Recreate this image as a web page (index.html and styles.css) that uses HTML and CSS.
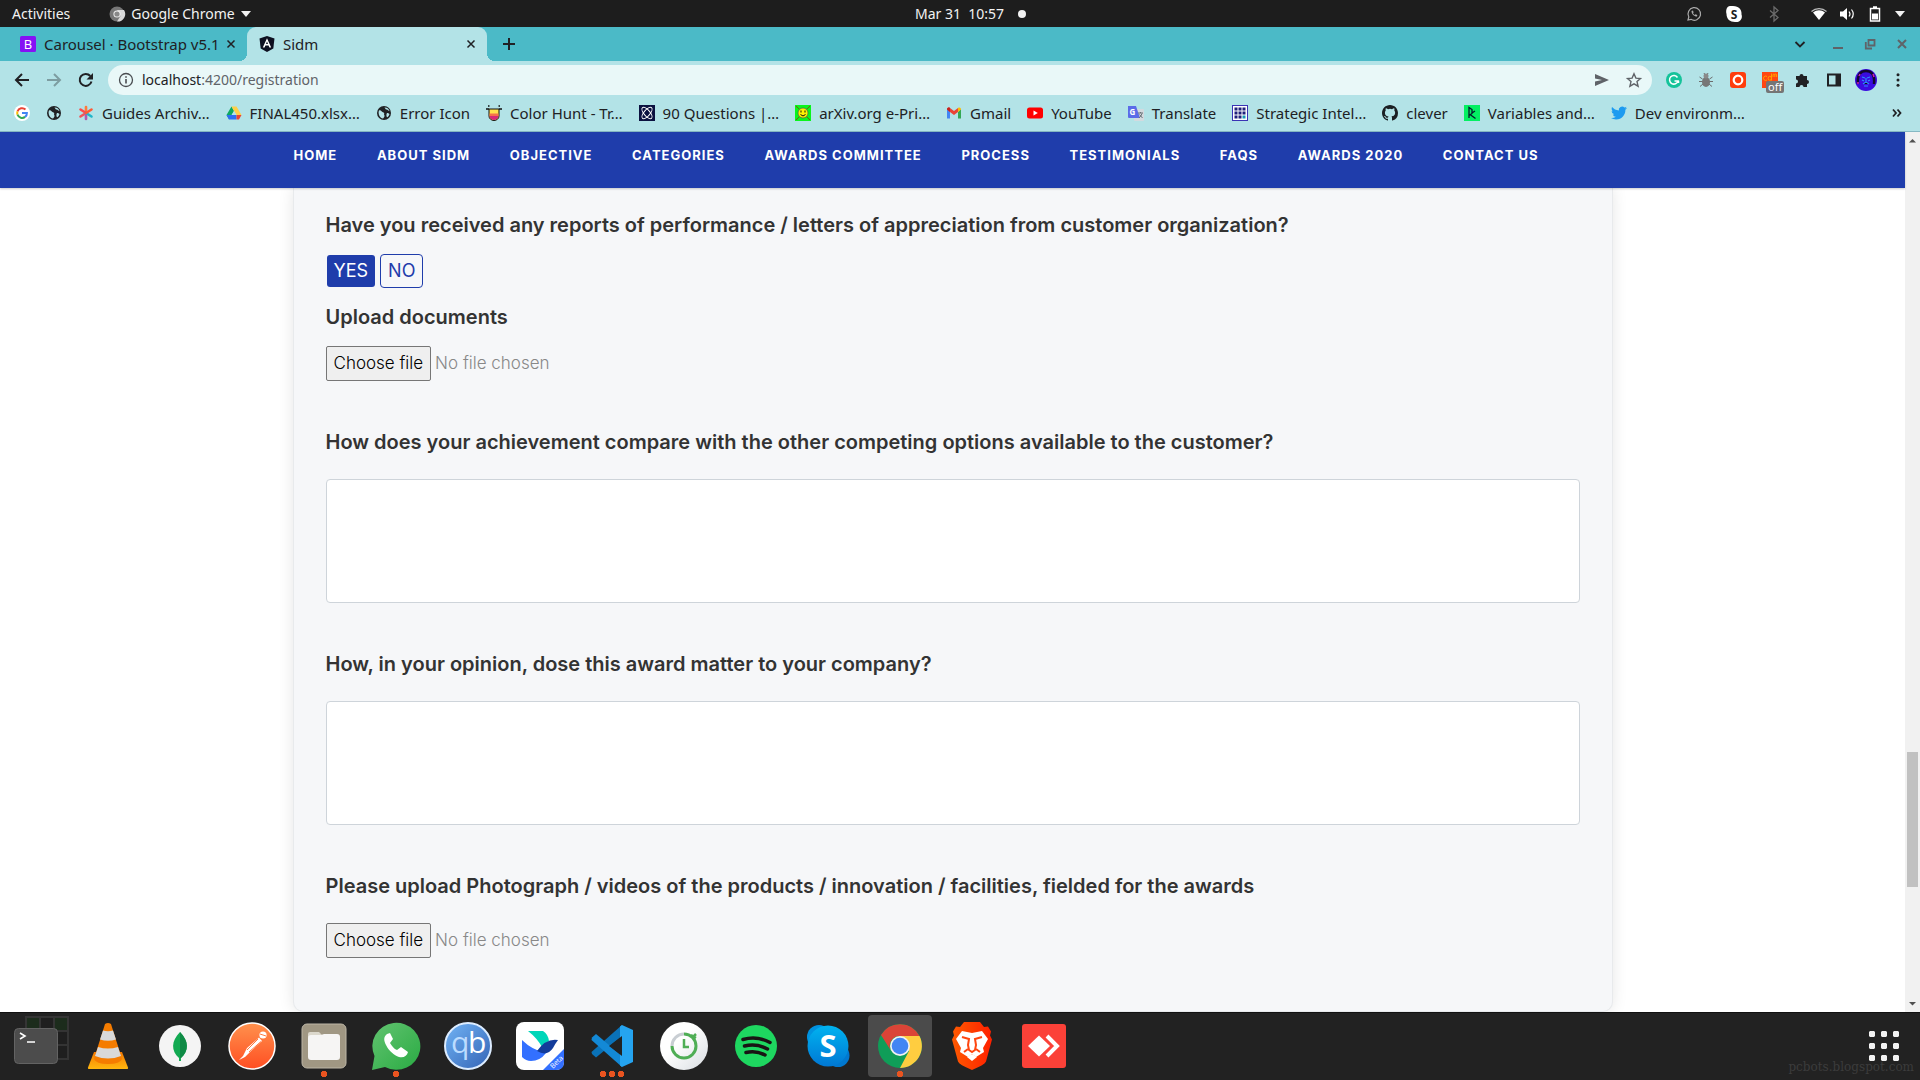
FILE: index.html
```html
<!DOCTYPE html>
<html lang="en">
<head>
<meta charset="utf-8">
<title>Sidm</title>
<link rel="stylesheet" href="styles.css">
</head>
<body>
<svg class="defs" aria-hidden="true">
  <defs>
    <linearGradient id="gVlc" x1="0" y1="0" x2="0" y2="1"><stop offset="0" stop-color="#f57900"/><stop offset="1" stop-color="#ffb70f"/></linearGradient>
    <linearGradient id="gPost" x1="0" y1="0" x2="0" y2="1"><stop offset="0" stop-color="#ff914d"/><stop offset="1" stop-color="#ff4e22"/></linearGradient>
    <linearGradient id="gQb" x1="0" y1="0" x2="1" y2="1"><stop offset="0" stop-color="#72b4f5"/><stop offset="1" stop-color="#3363b5"/></linearGradient>
    <linearGradient id="gWa" x1="0" y1="0" x2="1" y2="1"><stop offset="0" stop-color="#62c370"/><stop offset="1" stop-color="#2aab43"/></linearGradient>
    <linearGradient id="gSk" x1="0" y1="0" x2="0" y2="1"><stop offset="0" stop-color="#00b3f0"/><stop offset="1" stop-color="#0078d4"/></linearGradient>
    <linearGradient id="gBr" x1="0" y1="0" x2="1" y2="0"><stop offset="0" stop-color="#ff5a00"/><stop offset="1" stop-color="#ff2000"/></linearGradient>
    <linearGradient id="gTime" x1="0" y1="0" x2="1" y2="1"><stop offset="0.4" stop-color="#ffffff"/><stop offset="1" stop-color="#d9dde2"/></linearGradient>
  </defs>
  <symbol id="globe" viewBox="0 0 16 16"><circle cx="8" cy="8" r="7" fill="#202124"/><path d="M3 5.500c2-1 2.500 1.500 4.500 2 1.500.500 0 2 1 3 .5.700-1 2.500-1.500 3C4 13 2.500 10 2.600 7zM8 2.500c1.500 0 1 2 2.500 2s1.500 1.500 3 1.500c-.5-2-2.500-4-5.500-3.500zM11 8c1 0 2 .5 2.500 1-.5 2-1.500 3-2.500 3.300-.8-1-.8-3.300 0-4.300z" fill="#b3e3e7"/></symbol>
  <symbol id="close" viewBox="0 0 10 10"><path d="M1.500 1.500l7 7M8.500 1.500l-7 7" stroke="currentColor" stroke-width="1.500"/></symbol>
</svg>

<header class="topbar">
  <div class="topbar-side">
    <span>Activities</span>
    <span class="app-menu">
      <svg width="16" height="16" viewBox="0 0 16 16"><circle cx="8" cy="8" r="7.500" fill="#777"/><path d="M8 4h7a7.500 7.500 0 0 1-7 11.500L11.500 10z" fill="#d8d8d8"/><circle cx="8" cy="8" r="3.600" fill="#eee"/><circle cx="8" cy="8" r="2.600" fill="#888"/></svg>
      Google Chrome
      <svg width="10" height="6" viewBox="0 0 10 6"><path d="M0 0h10L5 6z" fill="#f2f2f2"/></svg>
    </span>
  </div>
  <div class="clock"><span>Mar 31&nbsp; 10:57</span><i></i></div>
  <div class="topbar-side tray">
    <svg class="tray-wide" width="16" height="16" viewBox="0 0 16 16" fill="none" stroke="#aaa" stroke-width="1.200"><path d="M2 14l.8-3A6.300 6.300 0 1 1 5 13.300z"/><path d="M5.500 5c0 3 2.500 5.500 5.500 5.500l.3-1.500-1.800-.7-.8.700C7.900 8.600 7.300 7.900 7 7.200l.6-.8L7 4.600z" fill="#aaa" stroke="none"/></svg>
    <svg class="tray-wide" width="16" height="16" viewBox="0 0 16 16"><path d="M4 0h3c6 0 9 4 8.500 8.500C17 12 14 16 11.500 16H9C4 16 .5 13 .5 8-.5 4 1 0 4 0z" fill="#fff"/><text x="8" y="12.500" text-anchor="middle" class="glyph-bold" font-size="12" fill="#1d1d1d">S</text></svg>
    <svg class="tray-bt" width="16" height="16" viewBox="0 0 16 16"><path d="M4 4.500l8 7L8 15V1l4 3.500-8 7" fill="none" stroke="#6b6b6b" stroke-width="1.300"/></svg>
    <svg width="16" height="16" viewBox="0 0 16 16"><path d="M.5 5.500a11 11 0 0 1 15 0" stroke="#bbb" stroke-width="1.200" fill="none"/><path d="M2 6.500a9 9 0 0 1 12 0L8 14z" fill="#fff"/></svg>
    <svg width="16" height="16" viewBox="0 0 16 16"><path d="M1 5.500h3L8 2v12l-4-3.500H1z" fill="#fff"/><path d="M10 5.500q2 2.500 0 5M12.500 3.500q3.500 4.500 0 9" stroke="#fff" fill="none" stroke-width="1.200"/></svg>
    <svg width="16" height="16" viewBox="0 0 16 16"><path d="M3.500 2.500h9v12.500h-9zM6 1h4" fill="none" stroke="#fff" stroke-width="1.500"/><path d="M5 7.500h6v6H5z" fill="#fff"/></svg>
    <svg width="10" height="6" viewBox="0 0 10 6"><path d="M0 0h10L5 6z" fill="#f2f2f2"/></svg>
  </div>
</header>

<section class="tabs">
  <div class="tab">
    <svg width="16" height="16" viewBox="0 0 16 16"><rect width="16" height="16" rx="1.500" fill="#8512f5"/><text x="8" y="13" text-anchor="middle" class="glyph" font-size="13" fill="#fff">B</text></svg>
    <span class="tab-title">Carousel · Bootstrap v5.1</span>
    <button class="icon-btn" aria-label="Close tab"><svg width="10" height="10"><use href="#close"/></svg></button>
  </div>
  <div class="tab active">
    <svg width="16" height="16" viewBox="0 0 16 16"><path d="M8 0l7.500 2.500-1.200 10L8 16l-6.300-3.500L.5 2.500z" fill="#0d1020"/><path d="M8 2.300l4.200 9.200h-1.800l-.8-2H6.400l-.8 2H3.800zM8 5.500L7 8h2z" fill="#fff"/></svg>
    <span class="tab-title">Sidm</span>
    <button class="icon-btn" aria-label="Close tab"><svg width="10" height="10"><use href="#close"/></svg></button>
  </div>
  <button class="icon-btn new-tab" aria-label="New tab"><svg width="12" height="12" viewBox="0 0 12 12"><path d="M6 0v12M0 6h12" stroke="#202124" stroke-width="2"/></svg></button>
  <div class="window-controls">
    <button class="icon-btn search-tabs" aria-label="Search tabs"><svg width="12" height="12" viewBox="0 0 12 12"><path d="M1.500 4L6 8.500 10.500 4" fill="none" stroke="#202124" stroke-width="1.800"/></svg></button>
    <button class="icon-btn" aria-label="Minimize"><svg width="12" height="12" viewBox="0 0 12 12"><path d="M1 10h10" stroke="#5f6368" stroke-width="2"/></svg></button>
    <button class="icon-btn" aria-label="Restore"><svg width="12" height="12" viewBox="0 0 12 12"><path d="M4.500 2h6v5.500h-6zM1.800 4v6.500H8" fill="none" stroke="#5f6368" stroke-width="1.800"/></svg></button>
    <button class="icon-btn" aria-label="Close"><svg width="12" height="12" viewBox="0 0 12 12"><path d="M2 2l8 8M10 2l-8 8" stroke="#5f6368" stroke-width="2"/></svg></button>
  </div>
</section>

<section class="toolbar">
  <button class="icon-btn" aria-label="Back"><svg width="16" height="16" viewBox="0 0 16 16"><path d="M15 8H2M8 2L2 8l6 6" fill="none" stroke="#202124" stroke-width="2"/></svg></button>
  <button class="icon-btn" aria-label="Forward"><svg width="16" height="16" viewBox="0 0 16 16"><path d="M1 8h13M8 2l6 6-6 6" fill="none" stroke="#7d9da1" stroke-width="2"/></svg></button>
  <button class="icon-btn" aria-label="Reload"><svg width="16" height="16" viewBox="0 0 16 16"><path d="M13.500 9.500A6 6 0 1 1 12.300 4" fill="none" stroke="#202124" stroke-width="2"/><path d="M15 1v6.500H8.500z" fill="#202124"/></svg></button>
  <div class="omnibox">
    <svg width="16" height="16" viewBox="0 0 16 16"><circle cx="8" cy="8" r="6.500" fill="none" stroke="#4a4d51" stroke-width="1.300"/><path d="M8 7v4.500M8 4.300v1.500" stroke="#4a4d51" stroke-width="1.600"/></svg>
    <span class="url"><b>localhost</b>:4200/registration</span>
    <svg width="16" height="16" viewBox="0 0 16 16"><path d="M1 2l14 6-14 6V9.500L8 8 1 6.500z" fill="#5f6368"/></svg>
    <svg width="16" height="16" viewBox="0 0 16 16"><path d="M8 1.800l1.900 4.300 4.600.4-3.500 3.100 1.100 4.600L8 11.800l-4.100 2.400L5 9.600 1.500 6.500l4.600-.4z" fill="none" stroke="#5f6368" stroke-width="1.400"/></svg>
  </div>
  <svg width="16" height="16" viewBox="0 0 16 16"><circle cx="8" cy="8" r="8" fill="#15c39a"/><path d="M11.500 5.500A4.300 4.300 0 1 0 12 9H8.500M12.500 11V8.800" fill="none" stroke="#fff" stroke-width="1.500"/></svg>
  <svg width="16" height="16" viewBox="0 0 16 16"><path d="M1.500 5l3 2M14.500 5l-3 2M1 9.500h14M2 14.500l3-2.500M14 14.500L11 12M6 1l1 2M10 1L9 3" stroke="#6d6d6d"/><ellipse cx="8" cy="10" rx="4" ry="5" fill="#777"/><circle cx="8" cy="4" r="2.500" fill="#8a8a8a"/></svg>
  <svg width="16" height="16" viewBox="0 0 16 16"><rect width="16" height="16" rx="3" fill="#ff3d0d"/><circle cx="8" cy="8" r="4.300" fill="none" stroke="#fff" stroke-width="2.200"/></svg>
  <span class="ext"><svg width="16" height="16" viewBox="0 0 16 16"><rect width="16" height="16" fill="#ff4713"/><path d="M5 4.500a2.200 2.200 0 1 0 0 3.500M9.500 1.500v7M9.500 6.300a1.700 2 0 1 1-3.400 0 1.700 2 0 1 1 3.400 0M11 5V2.500q1-1 1.800 0V5M12.800 2.500q1-1 1.800 0V5" fill="none" stroke="#ffa000"/></svg><span class="badge">off</span></span>
  <svg width="16" height="16" viewBox="0 0 16 16"><path d="M2 4h3.500a2 2 0 1 1 4 0H13v4a2 2 0 1 1 0 4v3H9.500a2 2 0 0 0-4 0H2v-3.500a2 2 0 0 0 0-4z" fill="#202124"/></svg>
  <svg width="16" height="16" viewBox="0 0 16 16"><path d="M2 2.500h12v11H2z" fill="none" stroke="#202124" stroke-width="2"/><path d="M9.500 2H14v12H9.500z" fill="#202124"/></svg>
  <svg class="avatar" width="22" height="22" viewBox="0 0 22 22"><circle cx="11" cy="11" r="11" fill="#3a0be0"/><path d="M3 15C2 5 6 2 11 2s9 3 8 13" fill="none" stroke="#12062f" stroke-width="2.500"/><path d="M7 8l3 1M15 8l-3 1M11 9v4M8 15l3-2 3 2M9 17h4M7 11l2 1M15 11l-2 1" stroke="#2d8cff" stroke-width="1.200"/><path d="M4 7l1-2M18 5l1 3M3 13v2" stroke="#d01bb8" stroke-width="1.500"/></svg>
  <button class="icon-btn" aria-label="Menu"><svg width="16" height="16" viewBox="0 0 16 16" fill="#202124"><circle cx="8" cy="2.800" r="1.500"/><circle cx="8" cy="8" r="1.500"/><circle cx="8" cy="13.200" r="1.500"/></svg></button>
</section>

<nav class="bookmarks" aria-label="Bookmarks">
  <a href="#"><svg width="16" height="16" viewBox="0 0 16 16"><circle cx="8" cy="8" r="8" fill="#fff"/><path d="M3.500 6.300A5 5 0 0 1 11.500 4.500" stroke="#ea4335" stroke-width="2" fill="none"/><path d="M3.500 6.300a5 5 0 0 0 0 3.400" stroke="#fbbc05" stroke-width="2" fill="none"/><path d="M3.500 9.700a5 5 0 0 0 7.600 2.200" stroke="#34a853" stroke-width="2" fill="none"/><path d="M11.100 11.900A4.800 4.800 0 0 0 12.900 8H8" stroke="#4285f4" stroke-width="2" fill="none"/></svg></a>
  <a href="#"><svg width="16" height="16"><use href="#globe"/></svg></a>
  <a href="#"><svg width="16" height="16" viewBox="0 0 16 16" stroke-width="2.600" stroke-linecap="round"><path d="M8 8V2" stroke="#ff7a3d"/><path d="M8 8L2.500 4.500" stroke="#ff4a4a"/><path d="M8 8l-5.500 3.500" stroke="#f2545b"/><path d="M8 8v6" stroke="#b05bb0"/><path d="M8 8l5.500 3.500" stroke="#20b6c9"/><path d="M8 8l5.500-3.500" stroke="#ff5a36"/></svg>Guides Archiv…</a>
  <a href="#"><svg width="16" height="16" viewBox="0 0 16 16"><path d="M5.500 1.500L8 6 3 14.500.5 10z" fill="#0da960"/><path d="M5.500 1.500h5L15.500 10h-5z" fill="#ffcf48"/><path d="M3 10h7.500v4.500H3L.5 10z" fill="#2d6ff2"/><path d="M10.500 10h5L13 14.500h-2.500z" fill="#ea4335"/><path d="M5.600 10h4.800L8 5.900z" fill="#b3e3e7"/></svg>FINAL450.xlsx…</a>
  <a href="#"><svg width="16" height="16"><use href="#globe"/></svg>Error Icon</a>
  <a href="#"><svg width="16" height="16" viewBox="0 0 16 16"><path d="M3 4h10v7a5 4.500 0 0 1-10 0z" fill="#ffe14d" stroke="#111"/><path d="M3.500 8.500h9v2.500h-9z" fill="#f4724a"/><path d="M3.500 11h9a4.500 4 0 0 1-9 0z" fill="#d62976"/><path d="M0 4h3M13 4h3M2 1h1.500M12.500 1H14" stroke="#111" stroke-width="1.500"/></svg>Color Hunt - Tr…</a>
  <a href="#"><svg width="16" height="16" viewBox="0 0 16 16"><rect width="16" height="16" fill="#0b1240"/><g fill="none" stroke="#fff"><ellipse cx="8" cy="8" rx="7" ry="3" transform="rotate(50 8 8)"/><ellipse cx="8" cy="8" rx="7" ry="3" transform="rotate(-50 8 8)"/></g></svg>90 Questions |…</a>
  <a href="#"><svg width="16" height="16" viewBox="0 0 16 16"><rect width="16" height="16" fill="#0af41c"/><path d="M1 1l14 14M15 1L1 15" stroke="#7b5410"/><circle cx="8" cy="8" r="5" fill="#fff200" stroke="#555" stroke-width=".7"/><path d="M6 5.500v2M10 5.500v2M5.500 9.500q2.500 3 5 0" stroke="#111" fill="none"/></svg>arXiv.org e-Pri…</a>
  <a href="#"><svg width="16" height="16" viewBox="0 0 16 16"><path d="M1 4v9.500h3V7z" fill="#4285f4"/><path d="M15 4v9.500h-3V7z" fill="#34a853"/><path d="M1 4.500C1 2.500 3 2 4 3l4 3 4-3v4l-4 3-4-3z" fill="#ea4335"/><path d="M12 3c1.500-1 3-.3 3 1.500L12 7z" fill="#fbbc04"/><path d="M1 4.500C1 2.500 3 2 4 3v4z" fill="#c5221f"/></svg>Gmail</a>
  <a href="#"><svg width="16" height="16" viewBox="0 0 16 16"><rect y="2.500" width="16" height="11" rx="2.500" fill="#f00"/><path d="M6.500 5.500v5L10.800 8z" fill="#fff"/></svg>YouTube</a>
  <a href="#"><svg width="16" height="16" viewBox="0 0 16 16"><rect x="6" y="4" width="10" height="12" rx="1" fill="#d3dadf"/><path d="M0 1h8l4 12H1q-1 0-1-1z" fill="#5b6be8"/><text x="1.500" y="9.500" class="glyph-bold" font-size="8" fill="#fff">G</text><path d="M10 8h5M12.500 7v1M14 8.500q-1 3-3 4.500M11.500 9.500l3 3.500" stroke="#6a7378" fill="none"/></svg>Translate</a>
  <a href="#"><svg width="16" height="16" viewBox="0 0 16 16"><rect x=".5" y=".5" width="15" height="15" fill="#fff" stroke="#3b34b5"/><path d="M2.500 2.500h3v3h-3zm4 0h3v3h-3zm4 0h3v3h-3zm-8 4h3v3h-3zm4 0h3v3h-3zm4 0h3v3h-3zm-8 4h3v3h-3zm4 0h3v3h-3z" fill="#20207a"/><path d="M10.500 10.500h3v3h-3z" fill="#1899b5"/></svg>Strategic Intel…</a>
  <a href="#"><svg width="16" height="16" viewBox="0 0 16 16"><path d="M8 0C3.580 0 0 3.580 0 8c0 3.540 2.290 6.530 5.470 7.590.4.070.55-.17.55-.38 0-.19-.01-.82-.01-1.490-2.010.37-2.530-.49-2.690-.94-.09-.23-.48-.94-.82-1.130-.28-.15-.68-.52-.01-.53.630-.01 1.080.58 1.230.82.72 1.210 1.870.87 2.330.66.070-.52.280-.87.510-1.070-1.780-.2-3.640-.89-3.640-3.950 0-.87.310-1.590.82-2.150-.08-.2-.36-1.020.08-2.120 0 0 .67-.21 2.200.82a7.500 7.500 0 0 1 4 0c1.530-1.040 2.200-.82 2.200-.82.440 1.100.16 1.920.08 2.120.510.56.82 1.270.82 2.150 0 3.070-1.870 3.750-3.650 3.950.290.25.540.73.540 1.480 0 1.070-.01 1.930-.01 2.200 0 .210.150.46.550.38A8 8 0 0 0 16 8c0-4.420-3.580-8-8-8z" fill="#1b1f23"/></svg>clever</a>
  <a href="#"><svg width="16" height="16" viewBox="0 0 16 16"><rect width="16" height="16" fill="#03ef62"/><path d="M5 13V2.500L8 4.500v4L5 10.500M8 8l3-2M6 9.500l5.500 4" fill="none" stroke="#05192d" stroke-width="1.300"/></svg>Variables and…</a>
  <a href="#"><svg width="16" height="16" viewBox="0 0 24 24"><path d="M23.950 4.570a10 10 0 0 1-2.820.77 4.960 4.960 0 0 0 2.160-2.720c-.95.55-2 .95-3.130 1.180a4.920 4.920 0 0 0-8.380 4.480C7.690 8.090 4.070 6.130 1.640 3.160a4.820 4.820 0 0 0-.67 2.480c0 1.710.87 3.210 2.190 4.090a4.900 4.900 0 0 1-2.230-.61v.06a4.920 4.920 0 0 0 3.950 4.830 5 5 0 0 1-2.210.080 4.940 4.940 0 0 0 4.600 3.420A9.870 9.870 0 0 1 0 19.540a13.990 13.990 0 0 0 7.550 2.210c9.050 0 14-7.500 14-13.980 0-.21 0-.42-.02-.63a9.940 9.940 0 0 0 2.420-2.570z" fill="#1d9bf0"/></svg>Dev environm…</a>
  <button class="icon-btn more" aria-label="More bookmarks"><svg width="10" height="10" viewBox="0 0 10 10"><path d="M1 1.500L4 5 1 8.500M5.500 1.500l3 3.500-3 3.500" fill="none" stroke="#202124" stroke-width="1.800"/></svg></button>
</nav>

<div class="viewport">
  <div class="page">
    <nav class="site-nav">
      <div class="site-nav-inner">
        <a href="#">HOME</a><a href="#">ABOUT SIDM</a><a href="#">OBJECTIVE</a><a href="#">CATEGORIES</a><a href="#">AWARDS COMMITTEE</a><a href="#">PROCESS</a><a href="#">TESTIMONIALS</a><a href="#">FAQS</a><a href="#">AWARDS 2020</a><a href="#">CONTACT US</a>
      </div>
    </nav>
    <div class="form-area">
      <form class="card">
        <div class="field reports">
          <p class="question">Have you received any reports of performance / letters of appreciation from customer organization?</p>
          <div class="choices">
            <button type="button" class="choice selected">YES</button>
            <button type="button" class="choice">NO</button>
          </div>
          <label class="question" for="docs">Upload documents</label>
          <div class="file">
            <input type="file" id="docs">
            <span class="file-button">Choose file</span>
            <span class="file-name">No file chosen</span>
          </div>
        </div>
        <div class="field">
          <label class="question" for="compare">How does your achievement compare with the other competing options available to the customer?</label>
          <textarea id="compare"></textarea>
        </div>
        <div class="field">
          <label class="question" for="matter">How, in your opinion, dose this award matter to your company?</label>
          <textarea id="matter"></textarea>
        </div>
        <div class="field">
          <label class="question" for="media">Please upload Photograph / videos of the products / innovation / facilities, fielded for the awards</label>
          <div class="file">
            <input type="file" id="media">
            <span class="file-button">Choose file</span>
            <span class="file-name">No file chosen</span>
          </div>
        </div>
      </form>
    </div>
  </div>
  <div class="scrollbar">
    <svg width="15" height="17" viewBox="0 0 15 17"><path d="M4 10.500h7L7.500 7z" fill="#505050"/></svg>
    <div class="space-above"></div><div class="thumb"></div><div class="space-below"></div>
    <svg width="15" height="17" viewBox="0 0 15 17"><path d="M4 7h7l-3.500 3.500z" fill="#505050"/></svg>
  </div>
</div>

<footer class="dock">
  <div class="app"><svg width="60" height="62" viewBox="0 0 60 62"><rect x="19" y="1" width="44" height="44" fill="#343434"/><path d="M21 3h12v12H21zM49 3h12v12H49z" fill="#1c2c1c"/><path d="M35 3h12v12H35zM49 17h12v12H49zM49 31h12v12H49z" fill="#1f1f1f"/><rect x="8.500" y="13.500" width="43" height="35" rx="4" fill="#4c4c4c" stroke="#636363"/><path d="M14 18l5 3-5 3M21 27h8" fill="none" stroke="#fff" stroke-width="1.600"/></svg></div>
  <div class="app"><svg width="48" height="48" viewBox="0 0 48 48"><path d="M10 30h28l6 15.500q.5 1.500-1 1.500H5q-1.500 0-1-1.500z" fill="url(#gVlc)"/><path d="M21 2q3-2 6 0l11 35q-2 5-14 5t-14-5z" fill="#f57c00"/><path d="M19 8.500q5 1.500 10 0l3 9q-8 2.500-16 0zM14 25q10 3 20 0l3 9q-13 5-26 0z" fill="#d9d9d9"/></svg></div>
  <div class="app"><svg width="48" height="48" viewBox="0 0 48 48"><circle cx="24" cy="24" r="21" fill="#f4f4f4"/><path d="M24 10c-9 9-9 19-1 26V39h2v-3c8-7 8-17-1-26z" fill="#13aa52"/><path d="M24 10c9 9 9 19 1 26h-1z" fill="#0f8a45"/></svg></div>
  <div class="app"><svg width="48" height="48" viewBox="0 0 48 48"><circle cx="24" cy="24" r="23" fill="url(#gPost)" stroke="#fff" stroke-width="1.500"/><circle cx="35" cy="13" r="3.600" fill="#fff"/><path d="M31 15.500L19 26l-4 8-4 4 6-3 5-5 12-11z" fill="#fff"/><path d="M30 17L19 28M33 19.500L21 30M32 12l6 2" stroke="#ff7a40"/></svg></div>
  <div class="app"><svg width="48" height="48" viewBox="0 0 48 48"><rect x="2" y="2" width="44" height="44" rx="5" fill="#a09783" stroke="#bdb6a6"/><path d="M8 16v-4q0-2 2-2h9l4 4h-3z" fill="#dcd8cc"/><path d="M8 16q0-3 3-3h10l3-1h13q3 0 3 3v20q0 3-3 3H11q-3 0-3-3z" fill="#f6f5f4"/></svg><i class="dots one"></i></div>
  <div class="app"><svg width="48" height="48" viewBox="0 0 48 48"><path d="M0 48l2.500-14A24 23.500 0 1 1 13 45z" fill="url(#gWa)"/><path d="M15 12c-4 3-3 7-1 11 3 6 8 10 13 12 5 1 8-1 9-5l-7-5-4 3c-3-1-5-4-7-7l3-4-3-6z" fill="#fff"/></svg><i class="dots one"></i></div>
  <div class="app"><svg width="48" height="48" viewBox="0 0 48 48"><circle cx="24" cy="24" r="23" fill="url(#gQb)" stroke="#dcecff" stroke-width="2"/><text x="7" y="31" class="glyph" font-size="30" fill="#bcdcff">q</text><text x="24" y="31" class="glyph" font-size="30" fill="#fff">b</text></svg></div>
  <div class="app"><svg width="48" height="48" viewBox="0 0 48 48"><rect width="48" height="48" rx="8" fill="#fff"/><path d="M12 9h15q5 3 6 10-4 2-7 6Q21 16 12 9z" fill="#00d6b9"/><path d="M6 18q10 10 24 13-6 8-15 8-5 0-9-4z" fill="#3370ff"/><path d="M21 29q9-13 21-11-3 4-5 8-6 9-16 3z" fill="#133c9a"/><path d="M48 27v13q0 8-8 8H27z" fill="#3370ff"/><text transform="translate(37 47) rotate(-45)" class="glyph" font-size="7" fill="#fff">Beta</text></svg></div>
  <div class="app"><svg width="48" height="48" viewBox="0 0 48 48"><path d="M4 32l4 3.500L34 14V3L3.500 30z" fill="#0a72b8"/><path d="M4 15.500l4-3.500 26 22V45L3.500 18z" fill="#1389d6"/><path d="M34 3l11 5v32l-11 5-2-1.500V4.500z" fill="#25a4f0"/><path d="M34 14v20L21 24z" fill="#222"/></svg><i class="dots three"></i></div>
  <div class="app"><svg width="48" height="48" viewBox="0 0 48 48"><circle cx="24" cy="24" r="24" fill="url(#gTime)"/><path d="M12 24a12 12 0 0 1 12-12" fill="none" stroke="#c9ced3" stroke-width="3"/><path d="M24 12a12 12 0 1 1-12 12" fill="none" stroke="#4fae55" stroke-width="3"/><path d="M24 17v8h5M31 13l5 3M33 15l3-3" stroke="#4fae55" fill="none" stroke-width="2.500"/></svg></div>
  <div class="app"><svg width="48" height="48" viewBox="0 0 48 48"><circle cx="24" cy="24" r="21" fill="#1ed760"/><path d="M11 17.500q14-4 27 3M12.500 24q12-3 23 3M14 30.500q10-2.500 19 2.500" fill="none" stroke="#191414" stroke-width="3.500" stroke-linecap="round"/></svg></div>
  <div class="app"><svg width="48" height="48" viewBox="0 0 48 48"><circle cx="15" cy="15" r="12" fill="#0092e0"/><circle cx="34" cy="33.500" r="11.500" fill="#0078d0"/><circle cx="24" cy="24" r="20.500" fill="url(#gSk)"/><text x="24" y="35" text-anchor="middle" class="glyph-bold" font-size="31" fill="#fff">S</text></svg></div>
  <div class="app current"><svg width="48" height="48" viewBox="0 0 48 48"><circle cx="24" cy="24" r="22" fill="#0f9d58"/><path d="M24 46a22 22 0 0 0 19.500-32H24l9 15z" fill="#ffcd40"/><path d="M5 13a22 22 0 0 1 38.500 1H24a10 10 0 0 0-9.500 14z" fill="#db4437"/><circle cx="24" cy="24" r="10" fill="#f1f1f1"/><circle cx="24" cy="24" r="8.300" fill="#4285f4"/></svg><i class="dots one"></i></div>
  <div class="app"><svg width="48" height="48" viewBox="0 0 48 48"><path d="M16 0h16l4 5 4-.5 3 5-1 4 2 4-6 22q-1 3-14 8.500Q11 42.500 10 39.500l-6-22 2-4-1-4 3-5 4 .5z" fill="url(#gBr)"/><path d="M14 9l10 2 10-2 6 8-5 9 1 4-8 5-4-3-4 3-8-5 1-4-5-9z" fill="#fff"/><path d="M14 15l7 2-1 6 1 5 3 2 3-2 1-5-1-6 7-2" fill="none" stroke="#ff4610" stroke-width="2"/><path d="M16 30l4-3M32 30l-4-3" stroke="#ff4610" stroke-width="2"/><path d="M24 32l5 3-5 4-5-4z" fill="#fff"/></svg></div>
  <div class="app"><svg width="48" height="48" viewBox="0 0 48 48"><rect x="2" y="2" width="44" height="44" rx="3" fill="#fb4138"/><path d="M19 13.500L30 24 19 34.500 8 24z" fill="#fff"/><path d="M27 14l10 10-10 10" fill="none" stroke="#fff" stroke-width="4"/></svg></div>
  <button class="icon-btn app-grid" aria-label="Show applications"><svg width="30" height="30" viewBox="0 0 30 30" fill="#f2f2f2"><path id="row" d="M1 0h4l1 1v4l-1 1H1L0 5V1zM13 0h4l1 1v4l-1 1h-4l-1-1V1zM25 0h4l1 1v4l-1 1h-4l-1-1V1z"/><use href="#row" y="12"/><use href="#row" y="24"/></svg></button>
  <span class="watermark">pcbots.blogspot.com</span>
</footer>
</body>
</html>
```
FILE: styles.css
```css
* { box-sizing: border-box; }
body {
  margin: 0;
  min-height: 100vh;
  display: flex;
  flex-direction: column;
  overflow: hidden;
  background: #fff;
  color: #202124;
  font: 14px/20px "Noto Sans", "Open Sans", sans-serif;
}
a { color: inherit; text-decoration: none; }
svg { display: block; flex: none; overflow: visible; }
.defs { position: absolute; width: 0; height: 0; }
.icon-btn { display: flex; padding: 0; border: 0; background: none; color: #202124; }
.glyph { font-family: "Open Sans", sans-serif; }
.glyph-bold { font-family: "Open Sans", sans-serif; font-weight: 700; }

/* Desktop top bar */
.topbar {
  display: grid;
  grid-template-columns: 1fr auto 1fr;
  align-items: center;
  height: 27px;
  padding: 0 15px 0 12px;
  background: #1d1d1d;
  color: #f2f2f2;
}
.topbar-side { display: flex; align-items: center; gap: 39px; }
.app-menu { display: flex; align-items: center; gap: 6px; }
.clock { display: flex; align-items: center; gap: 14px; margin-left: 24px; }
.clock i { width: 8px; height: 8px; border-radius: 50%; background: #f2f2f2; }
.tray { justify-content: flex-end; gap: 12px; }
.tray-wide { margin-right: 12px; }
.tray-bt { margin-right: 17px; }

/* Tab strip */
.tabs { display: flex; height: 34px; padding-left: 8px; background: #4bbac7; font-size: 15px; }
.tab { display: flex; align-items: center; gap: 8px; width: 239px; padding: 0 11px 0 12px; }
.tab-title { flex: 1; min-width: 0; white-space: nowrap; }
.tab.active { position: relative; width: 240px; border-radius: 9px 9px 0 0; background: #b3e3e7; }
.tab.active::before,
.tab.active::after { content: ""; position: absolute; bottom: 0; width: 8px; height: 8px; }
.tab.active::before { right: 100%; background: radial-gradient(circle at 0 0, transparent 8px, #b3e3e7 8px); }
.tab.active::after { left: 100%; background: radial-gradient(circle at 100% 0, transparent 8px, #b3e3e7 8px); }
.new-tab { align-items: center; margin-left: 16px; }
.window-controls { display: flex; align-items: center; gap: 20px; margin-left: auto; padding-right: 12px; }
.search-tabs { margin-right: 6px; }

/* Address row */
.toolbar { display: flex; align-items: center; gap: 16px; height: 38px; padding: 0 14px; background: #b3e3e7; }
.omnibox {
  display: flex;
  flex: 1;
  align-items: center;
  gap: 16px;
  height: 30px;
  margin: 0 -2px;
  padding: 0 10px;
  border-radius: 15px;
  background: #e9f8f8;
}
.url { flex: 1; margin-left: -8px; color: #5f6368; }
.url b { color: #202124; font-weight: 400; }
.ext { position: relative; }
.badge {
  position: absolute;
  left: 4px;
  top: 9px;
  padding: 0 2px;
  border-radius: 2px;
  background: #757575;
  color: #fff;
  font-size: 11px;
  line-height: 12px;
}
.avatar { margin: 0 -3px; }

/* Bookmarks */
.bookmarks {
  display: flex;
  align-items: center;
  gap: 16px;
  height: 33px;
  padding: 0 18px 4px 14px;
  border-bottom: 1px solid #86b9c4;
  background: #b3e3e7;
  font-size: 15px;
}
.bookmarks a { display: flex; align-items: center; gap: 8px; white-space: nowrap; }
.more { margin-left: auto; }

/* Web page */
.viewport { display: flex; flex: 1; min-height: 0; font-family: Inter, "Open Sans", sans-serif; }
.page { display: flex; flex: 1; flex-direction: column; }
.site-nav { z-index: 1; padding: 13px 0 23px; background: #1f3dab; box-shadow: 0 1px 2px rgba(0, 0, 0, 0.2); }
.site-nav-inner {
  display: flex;
  justify-content: space-between;
  max-width: 1320px;
  margin: 0 auto;
  padding: 0 74px 0 1px;
  color: #fff;
  font-size: 13px;
  font-weight: 700;
  letter-spacing: 1px;
  white-space: nowrap;
}
.form-area { display: flex; flex: 1; justify-content: center; overflow: hidden; }
.card {
  display: flex;
  flex: 1;
  flex-direction: column;
  gap: 49px;
  max-width: 1320px;
  padding: 25px 32px 32px;
  border: 1px solid #e8eaec;
  border-top: 0;
  border-radius: 0 0 10px 10px;
  background: #f6f7f9;
  box-shadow: 0 0 15px rgba(0, 0, 0, 0.1);
}
.field { display: flex; flex-direction: column; align-items: flex-start; gap: 25px; }
.reports { gap: 17px; }
.question { margin: 0; color: #333; font-size: 20px; font-weight: 600; line-height: 24px; }
.choices { display: flex; gap: 4px; }
.choice {
  height: 34px;
  padding: 0 7px;
  border: 1px solid #1f3dab;
  border-radius: 4px;
  background: transparent;
  color: #1f3dab;
  font: 18px/24px Inter, "Open Sans", sans-serif;
}
.choice.selected { border-color: transparent; background: #1f3dab; background-clip: padding-box; color: #fff; }
textarea { width: 100%; height: 124px; border: 1px solid #ced4da; border-radius: 4px; background: #fff; resize: none; }
.file { position: relative; display: flex; align-items: center; gap: 4px; font-size: 17px; font-weight: 300; line-height: 33px; }
.file input { position: absolute; inset: 0; width: 100%; opacity: 0; font-size: 12px; }
.file-button { padding: 0 7px; border: 1px solid #767676; border-radius: 2px; background: #efefef; color: #000; }
.file-name { color: #888; }
.scrollbar { display: flex; flex-direction: column; align-items: center; width: 15px; background: #f1f1f1; }
.space-above { flex: 604; }
.thumb { flex: 136; width: 11px; background: #c1c1c1; }
.space-below { flex: 108; }

/* Dock */
.dock { position: relative; display: flex; gap: 8px; height: 68px; padding: 2px 21px 3px 4px; border-top: 1px solid #111; background: #222; }
.app { position: relative; display: flex; align-items: center; justify-content: center; width: 64px; border-radius: 4px; }
.app.current { background: #4b4b4b; }
.dots { position: absolute; bottom: 0; height: 6px; background: radial-gradient(circle at 3px 3px, #e95420 3px, transparent 3px) 0 0 / 9px 6px; }
.one { width: 6px; }
.three { width: 24px; }
.app-grid { align-items: center; margin-left: auto; }
.watermark {
  position: absolute;
  right: 6px;
  bottom: 3px;
  color: #3c3c3c;
  font: 12px/20px "DejaVu Serif", serif;
}
```
